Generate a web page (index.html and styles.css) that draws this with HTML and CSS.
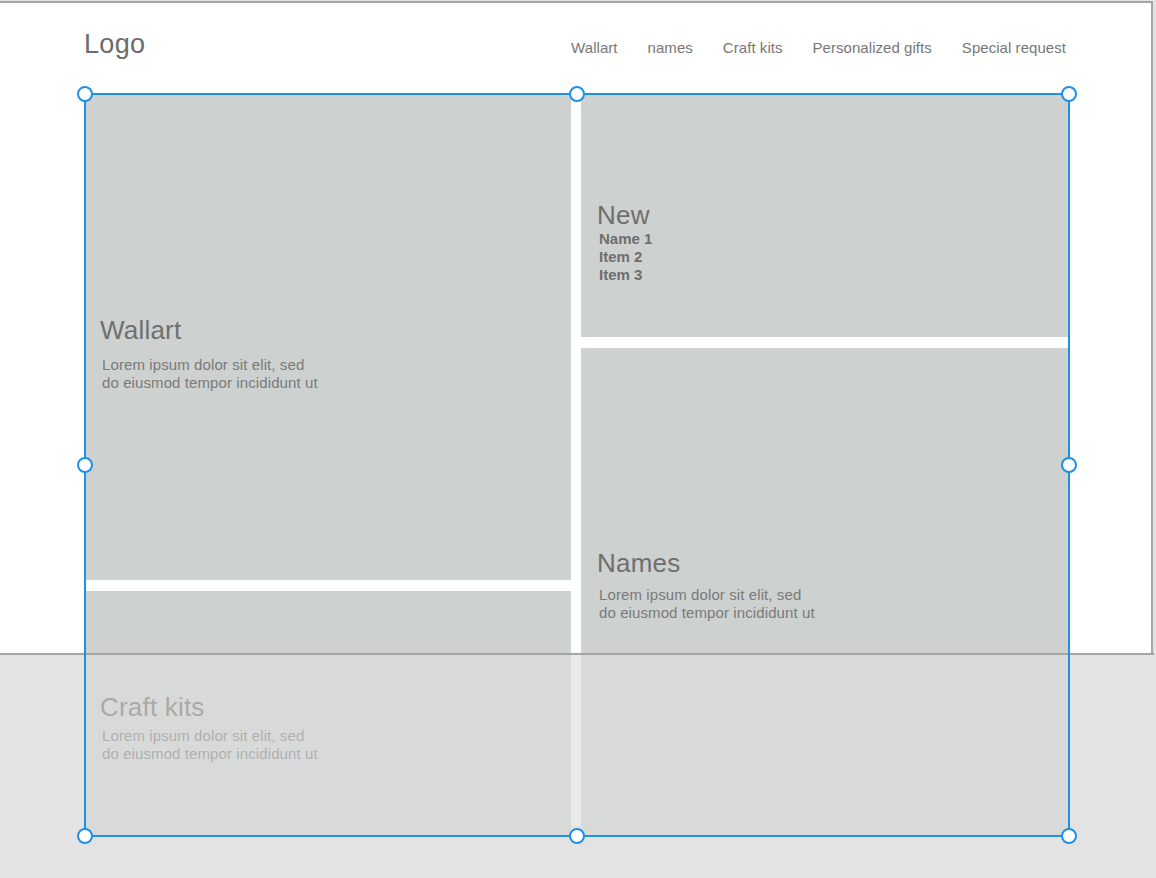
FILE: index.html
```html
<!DOCTYPE html>
<html lang="en">
<head>
<meta charset="utf-8">
<title>Wireframe</title>
<link rel="stylesheet" href="styles.css">
</head>
<body>
<div class="canvas">
  <div class="artboard">
    <header class="header">
      <div class="logo">Logo</div>
      <nav class="nav">
        <a class="nav-link">Wallart</a>
        <a class="nav-link">names</a>
        <a class="nav-link">Craft kits</a>
        <a class="nav-link">Personalized gifts</a>
        <a class="nav-link">Special request</a>
      </nav>
    </header>
    <main class="grid">
      <div class="col">
        <section class="card card-wallart">
          <h2 class="card-title">Wallart</h2>
          <p class="card-text">Lorem ipsum dolor sit elit, sed<br>do eiusmod tempor incididunt ut</p>
        </section>
        <section class="card card-craft">
          <h2 class="card-title">Craft kits</h2>
          <p class="card-text">Lorem ipsum dolor sit elit, sed<br>do eiusmod tempor incididunt ut</p>
        </section>
      </div>
      <div class="col col-right">
        <section class="card card-new">
          <h2 class="card-title">New</h2>
          <ul class="card-list">
            <li>Name 1</li>
            <li>Item 2</li>
            <li>Item 3</li>
          </ul>
        </section>
        <section class="card card-names">
          <h2 class="card-title">Names</h2>
          <p class="card-text">Lorem ipsum dolor sit elit, sed<br>do eiusmod tempor incididunt ut</p>
        </section>
      </div>
    </main>
  </div>
  <div class="outside-fade"></div>
  <div class="selection">
    <span class="handle h-tl"></span>
    <span class="handle h-tc"></span>
    <span class="handle h-tr"></span>
    <span class="handle h-ml"></span>
    <span class="handle h-mr"></span>
    <span class="handle h-bl"></span>
    <span class="handle h-bc"></span>
    <span class="handle h-br"></span>
  </div>
</div>
</body>
</html>
```
FILE: styles.css
```css
* { box-sizing: border-box; }

html, body {
  margin: 0;
  padding: 0;
  background: #e3e3e3;
  font-family: "Liberation Sans", Arial, Helvetica, sans-serif;
  overflow: hidden;
}

.canvas {
  position: relative;
  width: 1156px;
  height: 878px;
}

.artboard {
  margin-top: 1px;
  width: 1153px;
  height: 653px;
  background: #ffffff;
  border-top: 2px solid #a5a5a5;
  border-right: 2px solid #a5a5a5;
}

.header {
  display: flex;
  justify-content: space-between;
  align-items: baseline;
  padding: 25px 85px 0 84px;
  height: 56px;
}

.logo {
  font-size: 27px;
  line-height: 32px;
  color: #6b6b6b;
  letter-spacing: 0.3px;
}

.nav {
  display: flex;
  gap: 30px;
  align-items: baseline;
}

.nav-link {
  font-size: 15px;
  line-height: 18px;
  color: #777777;
  text-decoration: none;
  letter-spacing: 0.05px;
}

.grid {
  margin-top: 34px;
  margin-left: 85px;
  width: 984px;
  height: 742px;
  display: grid;
  grid-template-columns: 486px 488px;
  column-gap: 10px;
  background: linear-gradient(rgba(255,255,255,0.5), rgba(255,255,255,0.5)) no-repeat;
  background-size: 100% 733px;
}

.col {
  display: flex;
  flex-direction: column;
  gap: 11px;
}

.card {
  background: #cdd1d0;
  padding-left: 15px;
  color: #6e6e6e;
}

.col-right .card { padding-left: 16px; }

.card-wallart { height: 487px; padding-top: 222px; }
.card-craft { flex: 1; padding-top: 101px; }
.card-new { height: 244px; padding-top: 107px; }
.card-names { flex: 1; padding-top: 200px; }

.card-title {
  margin: 0;
  font-size: 26px;
  line-height: 30px;
  font-weight: normal;
  color: #6f6f6f;
  letter-spacing: 0.2px;
}

.card-text {
  margin: 11px 0 0 0;
  padding-left: 2px;
  font-size: 15px;
  line-height: 18px;
  color: #7a7a7a;
  letter-spacing: 0.1px;
}

.card-craft .card-text { margin-top: 5px; }
.card-names .card-text { margin-top: 8px; }

.card-list {
  list-style: none;
  margin: 0;
  padding: 0 0 0 2px;
  font-size: 15px;
  line-height: 18px;
  font-weight: bold;
  color: #6e6e6e;
}

.outside-fade {
  position: absolute;
  left: 0;
  top: 652px;
  width: 1154px;
  bottom: 0;
  border-top: 2px solid #a5a5a5;
  background: rgba(227,227,227,0.5);
  z-index: 1;
}

.selection {
  position: absolute;
  left: 84px;
  top: 92px;
  width: 986px;
  height: 744px;
  border: 2px solid #1e90e6;
  z-index: 2;
}

.handle {
  position: absolute;
  width: 16px;
  height: 16px;
  margin-left: -8px;
  margin-top: -8px;
  border: 2px solid #1e90e6;
  background: #ffffff;
  border-radius: 50%;
}

.h-tl { left: -1px; top: -1px; }
.h-tc { left: 491px; top: -1px; }
.h-tr { left: 983px; top: -1px; }
.h-ml { left: -1px; top: 370px; }
.h-mr { left: 983px; top: 370px; }
.h-bl { left: -1px; top: 741px; }
.h-bc { left: 491px; top: 741px; }
.h-br { left: 983px; top: 741px; }
```
